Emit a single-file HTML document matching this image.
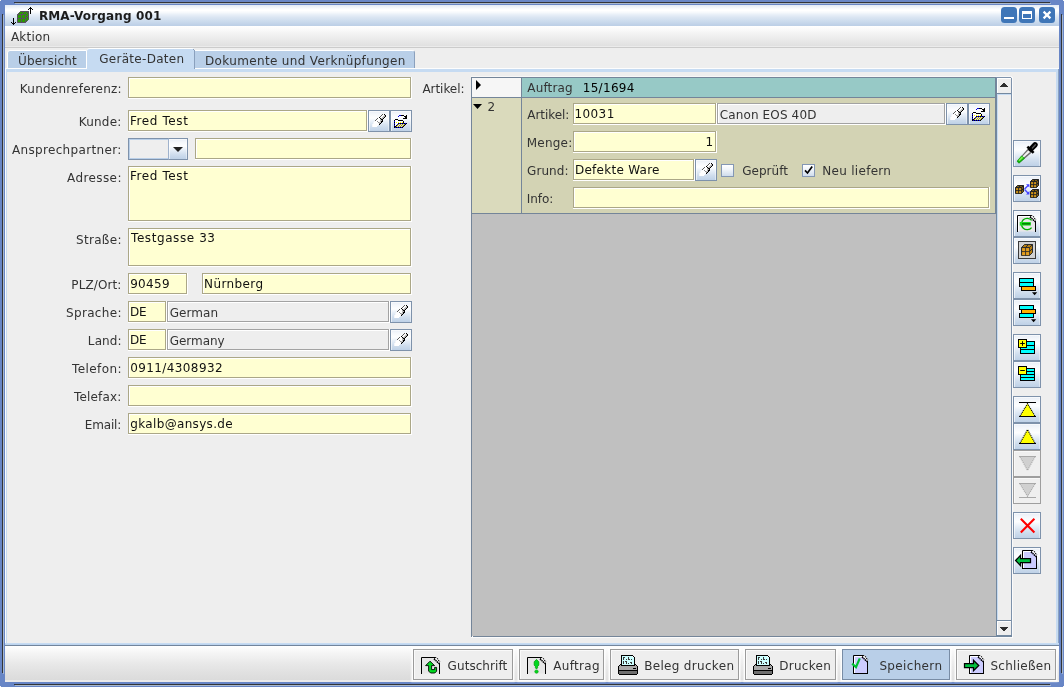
<!DOCTYPE html>
<html lang="de">
<head>
<meta charset="utf-8">
<title>RMA-Vorgang 001</title>
<style>
html,body{margin:0;padding:0;overflow:hidden;}
body{width:1064px;height:687px;overflow:hidden;background:#6886c6;position:relative;
  font-family:"DejaVu Sans","Liberation Sans",sans-serif;font-size:12px;color:#333333;line-height:15px;}
*{box-sizing:border-box;}
div,span,svg{position:absolute;}
.t{white-space:nowrap;height:15px;}
/* window frame */
.fr-dark{background:#333436;}
.fr-lite{background:#a5b7d2;}
#win{left:5px;top:5px;width:1054px;height:677px;background:#eeeeee;}
#title{left:5px;top:5px;width:1054px;height:21px;background:linear-gradient(#e2eaf5 0px,#eef3f9 2px,#fbfcfe 4px,#ffffff 5.5px,#f6f9fc 7.5px,#e9f0f8 9.5px,#dae5f2 12.5px,#cbdbed 16.5px,#c0d2e8 19.5px,#bccfe6 21px);}
#menu{left:5px;top:26px;width:1054px;height:22px;background:linear-gradient(#ffffff 0px,#fbfbfb 3px,#f2f2f2 8px,#e9e9e9 14px,#e0e0e0 20px,#ebebeb 20px,#ebebeb 21px,#cbcbcb 21px,#cbcbcb 22px);}
.wb{background:#3f76b8;border-radius:3.5px;width:16px;height:16px;top:7px;}
.wb i{position:absolute;background:#fff;display:block;}
/* tabs */
.tab{background:#b9cfe8;border:1px solid #fff;border-radius:3px 0 0 0;}
.tabsel{background:#c6dbf2;border-radius:3px 2px 0 0;}
#panel{left:5px;top:68px;width:1054px;height:578px;background:#eeeeee;}
/* fields */
.f{background:#ffffd2;border:1px solid #aba787;box-shadow:1px 1px 0 #ffffff,0 1px 0 #ffffff,1px 0 0 #ffffff,inset 1px 1px 0 #ffffff;}
.ro{background:#eeeeee;border-color:#a2a2a2;}
.b{border:1px solid #7e92ab;background:linear-gradient(#e8eef7 0,#f4f7fb 15%,#fdfeff 35%,#e6eef7 55%,#cfdded 78%,#bed1e7 100%);box-shadow:inset 1px 1px 0 rgba(255,255,255,.6),inset -1px 0 0 rgba(255,255,255,.4);}
.bd{border:1px solid #9e9e9e;background:#efefef;box-shadow:inset 1px 1px 0 #f8f8f8;}
.cb{width:13px;height:13px;border:1px solid #8497b4;background:linear-gradient(#ffffff 0,#f1f5fa 40%,#cfdcec 100%);}
/* grid */
#grid{left:471px;top:77px;width:526px;height:560px;background:#c0c0c0;border:1px solid #748599;}
/* bottom bar */
#bar{left:5px;top:646px;width:1054px;height:36px;background:linear-gradient(#ffffff 0px,#fcfcfc 2px,#f6f6f6 6px,#efefef 12px,#e8e8e8 18px,#e1e1e1 26px,#dbdbdb 34px,#ebeae9 34px,#ebeae9 36px);}
.bb{top:649px;height:31px;background:#eeeeee;border:1px solid #9b9b9b;box-shadow:inset 1px 1px 0 #fafafa,0 0 0 1px #fdfdfd,0 0 1.5px 2px rgba(255,255,255,.7),0 -2px 0 1px #fdfdfd;}
.bbsel{background:#b9cfe8;border-color:#788ca5;box-shadow:0 0 0 1px #fdfdfd,0 0 1.5px 2px rgba(255,255,255,.7),0 -2px 0 1px #fdfdfd;}
#txt{left:0;top:0;width:1064px;height:687px;will-change:transform;}

</style>
</head>
<body>
<!-- window frame decorations -->
<div class="fr-dark" style="left:14px;top:2px;width:1036px;height:1px"></div>
<div class="fr-lite" style="left:15px;top:3px;width:1036px;height:1px;background:#a8b8cc"></div>
<div class="fr-dark" style="left:2px;top:14px;width:1px;height:659px"></div>
<div class="fr-lite" style="left:3px;top:15px;width:1px;height:659px"></div>
<div class="fr-dark" style="left:1061px;top:14px;width:1px;height:659px"></div>
<div class="fr-lite" style="left:1062px;top:15px;width:1px;height:659px"></div>
<div class="fr-dark" style="left:14px;top:684px;width:1036px;height:1px"></div>
<div class="fr-lite" style="left:15px;top:685px;width:1036px;height:1px;background:#a8b8cc"></div>
<div style="left:0;top:0;width:1px;height:1px;background:#f4f4f4"></div>
<div style="left:1063px;top:0;width:1px;height:1px;background:#f4f4f4"></div>
<div style="left:0;top:686px;width:1px;height:1px;background:#f4f4f4"></div>
<div style="left:1063px;top:686px;width:1px;height:1px;background:#f4f4f4"></div>
<div id="win"></div>
<div id="title"></div>
<div id="menu"></div>
<!-- window buttons -->
<div class="wb" style="left:1001px"><i style="left:3px;top:10px;width:10px;height:2px"></i></div>
<div class="wb" style="left:1019px"><i style="left:3px;top:4px;width:10px;height:8px"></i><i style="left:4px;top:7px;width:8px;height:4px;background:#3f76b8"></i></div>
<div class="wb" style="left:1039px"><svg style="left:0;top:0" width="16" height="16" viewBox="0 0 16 16"><path d="M4.6 4.6 L11.4 11.4 M11.4 4.6 L4.6 11.4" stroke="#fff" stroke-width="2.2" fill="none"/></svg></div>
<!-- tabs -->
<div class="tab" style="left:7px;top:50px;width:80px;height:19px"></div>
<div class="tab" style="left:194px;top:50px;width:221px;height:19px;border-radius:0 3px 0 0;border-right-color:#8aa0bd"></div>
<div id="panel"></div>
<div style="left:5px;top:68px;width:1054px;height:1px;background:#fdfdfd"></div>
<div style="left:5px;top:69px;width:1054px;height:3px;background:#c6dbf2"></div>
<div style="left:5px;top:69px;width:1px;height:576px;background:#fdfdfd"></div>
<div style="left:6px;top:69px;width:1px;height:575px;background:#c6dbf2"></div>
<div style="left:1056px;top:69px;width:2px;height:575px;background:#c6dbf2"></div>
<div style="left:1058px;top:69px;width:1px;height:576px;background:#8da3bf"></div>
<div style="left:5px;top:643px;width:1054px;height:2px;background:linear-gradient(#cbdff4,#b7d0ec)"></div>
<div style="left:5px;top:645px;width:1054px;height:1px;background:#72859c"></div>
<div class="tabsel" style="left:87px;top:48px;width:107px;height:24px;border-top:1px solid #ffffff"></div>
<div style="left:193px;top:49px;width:1px;height:1px;background:#8aa0bd"></div>
<div style="left:194px;top:50px;width:1px;height:19px;background:#8aa0bd"></div>
<!-- left form fields -->
<div class="f" style="left:128px;top:77px;width:283px;height:21px"></div>
<div class="f" style="left:128px;top:110px;width:239px;height:21px"></div>
<div class="b" style="left:368px;top:110px;width:22px;height:22px"></div>
<div class="b" style="left:390px;top:110px;width:22px;height:22px"></div>
<div class="b" style="left:128px;top:138px;width:60px;height:22px;background:#eeeeee;box-shadow:inset 1px 1px 0 #b9cfe8,inset -1px -1px 0 #b9cfe8"></div>
<div class="b" style="left:168px;top:138px;width:20px;height:22px;border-left-color:#9fb2cc"></div>
<svg style="left:173px;top:147px" width="10" height="5" viewBox="0 0 10 5"><path d="M0 0H10L5 5Z" fill="#222"/></svg>
<div class="f" style="left:195px;top:138px;width:216px;height:21px"></div>
<div class="f" style="left:128px;top:166px;width:283px;height:55px"></div>
<div class="f" style="left:128px;top:228px;width:283px;height:38px"></div>
<div class="f" style="left:128px;top:273px;width:59px;height:21px"></div>
<div class="f" style="left:202px;top:273px;width:209px;height:21px"></div>
<div class="f" style="left:128px;top:301px;width:38px;height:21px"></div>
<div class="f ro" style="left:167px;top:301px;width:222px;height:21px"></div>
<div class="b" style="left:390px;top:301px;width:22px;height:22px"></div>
<div class="f" style="left:128px;top:329px;width:38px;height:21px"></div>
<div class="f ro" style="left:167px;top:329px;width:222px;height:21px"></div>
<div class="b" style="left:390px;top:329px;width:22px;height:22px"></div>
<div class="f" style="left:128px;top:357px;width:283px;height:21px"></div>
<div class="f" style="left:128px;top:385px;width:283px;height:21px"></div>
<div class="f" style="left:128px;top:413px;width:283px;height:21px"></div>
<!-- grid -->
<div id="grid"></div>
<div style="left:472px;top:78px;width:49px;height:19px;background:#f6f6f6"></div>
<div style="left:522px;top:78px;width:474px;height:19px;background:#97c9c6"></div>
<div style="left:472px;top:97px;width:524px;height:1px;background:#748599"></div>
<div style="left:472px;top:98px;width:49px;height:115px;background:#dadabc"></div>
<div style="left:522px;top:98px;width:474px;height:115px;background:#d3d3b4"></div>
<div style="left:521px;top:78px;width:1px;height:135px;background:#748599"></div>
<div style="left:472px;top:213px;width:524px;height:1px;background:#748599"></div>
<div style="left:995px;top:78px;width:1px;height:136px;background:#748599"></div>
<svg style="left:476px;top:80px" width="5" height="10" viewBox="0 0 5 10"><path d="M0 0L5 5L0 10Z" fill="#000"/></svg>
<svg style="left:473px;top:104px" width="9" height="5" viewBox="0 0 9 5"><path d="M0 0H9L4.5 5Z" fill="#000"/></svg>
<div class="f" style="left:573px;top:103px;width:143px;height:21px"></div>
<div class="f ro" style="left:717px;top:103px;width:228px;height:21px"></div>
<div class="b" style="left:946px;top:103px;width:22px;height:22px"></div>
<div class="b" style="left:968px;top:103px;width:22px;height:22px"></div>
<div class="f" style="left:573px;top:131px;width:143px;height:21px"></div>
<div class="f" style="left:573px;top:159px;width:121px;height:21px"></div>
<div class="b" style="left:695px;top:159px;width:22px;height:22px"></div>
<div class="cb" style="left:721px;top:164px"></div>
<div class="cb" style="left:802px;top:164px"></div>
<div class="f" style="left:573px;top:187px;width:416px;height:21px"></div>
<div style="left:472px;top:636px;width:1px;height:1px;background:#fbfbfb"></div>
<!-- scrollbar -->
<div style="left:471px;top:76px;width:541px;height:1px;background:#f7f7f7"></div>
<div style="left:1012px;top:77px;width:1px;height:561px;background:#fbfbfb"></div>
<div style="left:471px;top:637px;width:542px;height:1px;background:#fbfbfb"></div>
<div style="left:996px;top:77px;width:16px;height:560px;background:#eeeeee"></div>
<div style="left:997px;top:94px;width:1px;height:526px;background:#c6dbf2"></div>
<div style="left:996px;top:77px;width:1px;height:560px;background:#73889f"></div>
<div style="left:1011px;top:78px;width:1px;height:558px;background:#7e92ab"></div>
<div style="left:996px;top:77px;width:15px;height:1px;background:#7e92ab"></div>
<div style="left:996px;top:635px;width:16px;height:2px;background:#73889f"></div>
<div style="left:997px;top:78px;width:14px;height:1px;background:#ffffff"></div>
<div style="left:997px;top:78px;width:1px;height:15px;background:#ffffff"></div>
<div style="left:997px;top:93px;width:14px;height:1px;background:#73889f"></div>
<div style="left:997px;top:94px;width:14px;height:1px;background:#c6dbf2"></div>
<div style="left:997px;top:620px;width:14px;height:1px;background:#73889f"></div>
<div style="left:997px;top:621px;width:14px;height:1px;background:#ffffff"></div>
<div style="left:997px;top:621px;width:1px;height:14px;background:#ffffff"></div>
<svg style="left:1000px;top:83px" width="8" height="4" viewBox="0 0 8 4" shape-rendering="crispEdges"><path d="M3 0h2v1h-2zM2 1h4v1h-4zM1 2h6v1h-6zM0 3h8v1h-8z" fill="#2e2e2e"/></svg>
<svg style="left:1000px;top:627px" width="8" height="4" viewBox="0 0 8 4" shape-rendering="crispEdges"><path d="M0 0h8v1h-8zM1 1h6v1h-6zM2 2h4v1h-4zM3 3h2v1h-2z" fill="#2e2e2e"/></svg>
<!-- right toolbar -->
<div class="b" style="left:1013px;top:140px;width:28px;height:27px"></div>
<div class="b" style="left:1013px;top:175px;width:28px;height:27px"></div>
<div class="b" style="left:1013px;top:210px;width:28px;height:27px"></div>
<div class="b" style="left:1013px;top:237px;width:28px;height:27px"></div>
<div class="b" style="left:1013px;top:272px;width:28px;height:27px"></div>
<div class="b" style="left:1013px;top:299px;width:28px;height:27px"></div>
<div class="b" style="left:1013px;top:334px;width:28px;height:27px"></div>
<div class="b" style="left:1013px;top:361px;width:28px;height:27px"></div>
<div class="b" style="left:1013px;top:396px;width:28px;height:27px"></div>
<div class="b" style="left:1013px;top:423px;width:28px;height:27px"></div>
<div class="bd" style="left:1013px;top:450px;width:28px;height:27px"></div>
<div class="bd" style="left:1013px;top:477px;width:28px;height:27px"></div>
<div class="b" style="left:1013px;top:512px;width:28px;height:27px"></div>
<div class="b" style="left:1013px;top:547px;width:28px;height:27px"></div>
<!-- bottom bar -->
<div id="bar"></div>
<div class="bb" style="left:413px;width:100px"></div>
<div class="bb" style="left:519px;width:85px"></div>
<div class="bb" style="left:610px;width:129px"></div>
<div class="bb" style="left:745px;width:91px"></div>
<div class="bb bbsel" style="left:842px;width:108px"></div>
<div class="bb" style="left:956px;width:100px"></div>

<!-- icons -->
<svg id="ico" width="1064" height="687" viewBox="0 0 1064 687" style="left:0;top:0"><path d="M17.5 14.5l3 -3h8v8l-3 3Z" fill="#2a9b00"/><path d="M17.5 14.5h8v8h-8Z M17.5 14.5l3 -3h8l-3 3 M28.5 11.5v8l-3 3" fill="#2a9b00" stroke="#57525c" stroke-linejoin="round"/><path d="M21.5 14.5v8 M17.5 18.5h8 M21.5 14.5l3 -3 M25.5 18.5l3 -3" fill="none" stroke="#57525c" stroke-width="1"/>
<path shape-rendering="crispEdges" d="M30 7h1v7h-1zM29 8h3v1h-3zM28 9h1v1h-1zM32 9h1v1h-1z" fill="#000"/>
<path shape-rendering="crispEdges" d="M13 18h1v7h-1zM12 23h3v1h-3zM11 22h1v1h-1zM15 22h1v1h-1z" fill="#000"/>
<path d="M28.5 9.5L29.5 8.5M32.5 9.5L31.5 8.5M11.5 22.5L12.5 23.5M15.5 22.5L14.5 23.5" stroke="#000" stroke-width="0.7" fill="none"/>
<g transform="translate(368,110)"><g shape-rendering="crispEdges"><rect x="14" y="4" width="1" height="1" fill="#5a5a5a"/><rect x="15" y="4" width="1" height="1" fill="#ffffff"/><rect x="16" y="4" width="1" height="1" fill="#000000"/><rect x="13" y="5" width="1" height="1" fill="#5a5a5a"/><rect x="14" y="5" width="2" height="1" fill="#ffffff"/><rect x="16" y="5" width="1" height="1" fill="#bcbcbc"/><rect x="17" y="5" width="1" height="1" fill="#000000"/><rect x="12" y="6" width="1" height="1" fill="#5a5a5a"/><rect x="13" y="6" width="2" height="1" fill="#ffffff"/><rect x="15" y="6" width="2" height="1" fill="#bcbcbc"/><rect x="17" y="6" width="1" height="1" fill="#000000"/><rect x="11" y="7" width="1" height="1" fill="#000000"/><rect x="12" y="7" width="2" height="1" fill="#ffffff"/><rect x="14" y="7" width="2" height="1" fill="#bcbcbc"/><rect x="16" y="7" width="1" height="1" fill="#000000"/><rect x="9" y="8" width="1" height="1" fill="#5a5a5a"/><rect x="10" y="8" width="2" height="1" fill="#ffffff"/><rect x="12" y="8" width="1" height="1" fill="#000000"/><rect x="13" y="8" width="2" height="1" fill="#bcbcbc"/><rect x="15" y="8" width="1" height="1" fill="#000000"/><rect x="8" y="9" width="1" height="1" fill="#5a5a5a"/><rect x="9" y="9" width="3" height="1" fill="#ffffff"/><rect x="12" y="9" width="1" height="1" fill="#bcbcbc"/><rect x="13" y="9" width="2" height="1" fill="#000000"/><rect x="7" y="10" width="1" height="1" fill="#5a5a5a"/><rect x="8" y="10" width="4" height="1" fill="#ffffff"/><rect x="12" y="10" width="2" height="1" fill="#bcbcbc"/><rect x="14" y="10" width="1" height="1" fill="#000000"/><rect x="6" y="11" width="1" height="1" fill="#f4f6fa"/><rect x="7" y="11" width="2" height="1" fill="#ffffff"/><rect x="9" y="11" width="1" height="1" fill="#8c8c8c"/><rect x="10" y="11" width="2" height="1" fill="#ffffff"/><rect x="12" y="11" width="1" height="1" fill="#bcbcbc"/><rect x="13" y="11" width="2" height="1" fill="#000000"/><rect x="5" y="12" width="1" height="1" fill="#f4f6fa"/><rect x="6" y="12" width="4" height="1" fill="#ffffff"/><rect x="10" y="12" width="1" height="1" fill="#8c8c8c"/><rect x="11" y="12" width="2" height="1" fill="#bcbcbc"/><rect x="13" y="12" width="1" height="1" fill="#000000"/><rect x="5" y="13" width="1" height="1" fill="#f4f6fa"/><rect x="6" y="13" width="5" height="1" fill="#ffffff"/><rect x="11" y="13" width="1" height="1" fill="#8c8c8c"/><rect x="12" y="13" width="1" height="1" fill="#000000"/><rect x="4" y="14" width="1" height="1" fill="#f4f6fa"/><rect x="5" y="14" width="6" height="1" fill="#ffffff"/><rect x="11" y="14" width="1" height="1" fill="#000000"/><rect x="4" y="15" width="1" height="1" fill="#f4f6fa"/><rect x="5" y="15" width="5" height="1" fill="#ffffff"/><rect x="4" y="16" width="1" height="1" fill="#f4f6fa"/><rect x="5" y="16" width="4" height="1" fill="#ffffff"/></g></g>
<g transform="translate(390,301)"><g shape-rendering="crispEdges"><rect x="14" y="4" width="1" height="1" fill="#5a5a5a"/><rect x="15" y="4" width="1" height="1" fill="#ffffff"/><rect x="16" y="4" width="1" height="1" fill="#000000"/><rect x="13" y="5" width="1" height="1" fill="#5a5a5a"/><rect x="14" y="5" width="2" height="1" fill="#ffffff"/><rect x="16" y="5" width="1" height="1" fill="#bcbcbc"/><rect x="17" y="5" width="1" height="1" fill="#000000"/><rect x="12" y="6" width="1" height="1" fill="#5a5a5a"/><rect x="13" y="6" width="2" height="1" fill="#ffffff"/><rect x="15" y="6" width="2" height="1" fill="#bcbcbc"/><rect x="17" y="6" width="1" height="1" fill="#000000"/><rect x="11" y="7" width="1" height="1" fill="#000000"/><rect x="12" y="7" width="2" height="1" fill="#ffffff"/><rect x="14" y="7" width="2" height="1" fill="#bcbcbc"/><rect x="16" y="7" width="1" height="1" fill="#000000"/><rect x="9" y="8" width="1" height="1" fill="#5a5a5a"/><rect x="10" y="8" width="2" height="1" fill="#ffffff"/><rect x="12" y="8" width="1" height="1" fill="#000000"/><rect x="13" y="8" width="2" height="1" fill="#bcbcbc"/><rect x="15" y="8" width="1" height="1" fill="#000000"/><rect x="8" y="9" width="1" height="1" fill="#5a5a5a"/><rect x="9" y="9" width="3" height="1" fill="#ffffff"/><rect x="12" y="9" width="1" height="1" fill="#bcbcbc"/><rect x="13" y="9" width="2" height="1" fill="#000000"/><rect x="7" y="10" width="1" height="1" fill="#5a5a5a"/><rect x="8" y="10" width="4" height="1" fill="#ffffff"/><rect x="12" y="10" width="2" height="1" fill="#bcbcbc"/><rect x="14" y="10" width="1" height="1" fill="#000000"/><rect x="6" y="11" width="1" height="1" fill="#f4f6fa"/><rect x="7" y="11" width="2" height="1" fill="#ffffff"/><rect x="9" y="11" width="1" height="1" fill="#8c8c8c"/><rect x="10" y="11" width="2" height="1" fill="#ffffff"/><rect x="12" y="11" width="1" height="1" fill="#bcbcbc"/><rect x="13" y="11" width="2" height="1" fill="#000000"/><rect x="5" y="12" width="1" height="1" fill="#f4f6fa"/><rect x="6" y="12" width="4" height="1" fill="#ffffff"/><rect x="10" y="12" width="1" height="1" fill="#8c8c8c"/><rect x="11" y="12" width="2" height="1" fill="#bcbcbc"/><rect x="13" y="12" width="1" height="1" fill="#000000"/><rect x="5" y="13" width="1" height="1" fill="#f4f6fa"/><rect x="6" y="13" width="5" height="1" fill="#ffffff"/><rect x="11" y="13" width="1" height="1" fill="#8c8c8c"/><rect x="12" y="13" width="1" height="1" fill="#000000"/><rect x="4" y="14" width="1" height="1" fill="#f4f6fa"/><rect x="5" y="14" width="6" height="1" fill="#ffffff"/><rect x="11" y="14" width="1" height="1" fill="#000000"/><rect x="4" y="15" width="1" height="1" fill="#f4f6fa"/><rect x="5" y="15" width="5" height="1" fill="#ffffff"/><rect x="4" y="16" width="1" height="1" fill="#f4f6fa"/><rect x="5" y="16" width="4" height="1" fill="#ffffff"/></g></g>
<g transform="translate(390,329)"><g shape-rendering="crispEdges"><rect x="14" y="4" width="1" height="1" fill="#5a5a5a"/><rect x="15" y="4" width="1" height="1" fill="#ffffff"/><rect x="16" y="4" width="1" height="1" fill="#000000"/><rect x="13" y="5" width="1" height="1" fill="#5a5a5a"/><rect x="14" y="5" width="2" height="1" fill="#ffffff"/><rect x="16" y="5" width="1" height="1" fill="#bcbcbc"/><rect x="17" y="5" width="1" height="1" fill="#000000"/><rect x="12" y="6" width="1" height="1" fill="#5a5a5a"/><rect x="13" y="6" width="2" height="1" fill="#ffffff"/><rect x="15" y="6" width="2" height="1" fill="#bcbcbc"/><rect x="17" y="6" width="1" height="1" fill="#000000"/><rect x="11" y="7" width="1" height="1" fill="#000000"/><rect x="12" y="7" width="2" height="1" fill="#ffffff"/><rect x="14" y="7" width="2" height="1" fill="#bcbcbc"/><rect x="16" y="7" width="1" height="1" fill="#000000"/><rect x="9" y="8" width="1" height="1" fill="#5a5a5a"/><rect x="10" y="8" width="2" height="1" fill="#ffffff"/><rect x="12" y="8" width="1" height="1" fill="#000000"/><rect x="13" y="8" width="2" height="1" fill="#bcbcbc"/><rect x="15" y="8" width="1" height="1" fill="#000000"/><rect x="8" y="9" width="1" height="1" fill="#5a5a5a"/><rect x="9" y="9" width="3" height="1" fill="#ffffff"/><rect x="12" y="9" width="1" height="1" fill="#bcbcbc"/><rect x="13" y="9" width="2" height="1" fill="#000000"/><rect x="7" y="10" width="1" height="1" fill="#5a5a5a"/><rect x="8" y="10" width="4" height="1" fill="#ffffff"/><rect x="12" y="10" width="2" height="1" fill="#bcbcbc"/><rect x="14" y="10" width="1" height="1" fill="#000000"/><rect x="6" y="11" width="1" height="1" fill="#f4f6fa"/><rect x="7" y="11" width="2" height="1" fill="#ffffff"/><rect x="9" y="11" width="1" height="1" fill="#8c8c8c"/><rect x="10" y="11" width="2" height="1" fill="#ffffff"/><rect x="12" y="11" width="1" height="1" fill="#bcbcbc"/><rect x="13" y="11" width="2" height="1" fill="#000000"/><rect x="5" y="12" width="1" height="1" fill="#f4f6fa"/><rect x="6" y="12" width="4" height="1" fill="#ffffff"/><rect x="10" y="12" width="1" height="1" fill="#8c8c8c"/><rect x="11" y="12" width="2" height="1" fill="#bcbcbc"/><rect x="13" y="12" width="1" height="1" fill="#000000"/><rect x="5" y="13" width="1" height="1" fill="#f4f6fa"/><rect x="6" y="13" width="5" height="1" fill="#ffffff"/><rect x="11" y="13" width="1" height="1" fill="#8c8c8c"/><rect x="12" y="13" width="1" height="1" fill="#000000"/><rect x="4" y="14" width="1" height="1" fill="#f4f6fa"/><rect x="5" y="14" width="6" height="1" fill="#ffffff"/><rect x="11" y="14" width="1" height="1" fill="#000000"/><rect x="4" y="15" width="1" height="1" fill="#f4f6fa"/><rect x="5" y="15" width="5" height="1" fill="#ffffff"/><rect x="4" y="16" width="1" height="1" fill="#f4f6fa"/><rect x="5" y="16" width="4" height="1" fill="#ffffff"/></g></g>
<g transform="translate(946,103)"><g shape-rendering="crispEdges"><rect x="14" y="4" width="1" height="1" fill="#5a5a5a"/><rect x="15" y="4" width="1" height="1" fill="#ffffff"/><rect x="16" y="4" width="1" height="1" fill="#000000"/><rect x="13" y="5" width="1" height="1" fill="#5a5a5a"/><rect x="14" y="5" width="2" height="1" fill="#ffffff"/><rect x="16" y="5" width="1" height="1" fill="#bcbcbc"/><rect x="17" y="5" width="1" height="1" fill="#000000"/><rect x="12" y="6" width="1" height="1" fill="#5a5a5a"/><rect x="13" y="6" width="2" height="1" fill="#ffffff"/><rect x="15" y="6" width="2" height="1" fill="#bcbcbc"/><rect x="17" y="6" width="1" height="1" fill="#000000"/><rect x="11" y="7" width="1" height="1" fill="#000000"/><rect x="12" y="7" width="2" height="1" fill="#ffffff"/><rect x="14" y="7" width="2" height="1" fill="#bcbcbc"/><rect x="16" y="7" width="1" height="1" fill="#000000"/><rect x="9" y="8" width="1" height="1" fill="#5a5a5a"/><rect x="10" y="8" width="2" height="1" fill="#ffffff"/><rect x="12" y="8" width="1" height="1" fill="#000000"/><rect x="13" y="8" width="2" height="1" fill="#bcbcbc"/><rect x="15" y="8" width="1" height="1" fill="#000000"/><rect x="8" y="9" width="1" height="1" fill="#5a5a5a"/><rect x="9" y="9" width="3" height="1" fill="#ffffff"/><rect x="12" y="9" width="1" height="1" fill="#bcbcbc"/><rect x="13" y="9" width="2" height="1" fill="#000000"/><rect x="7" y="10" width="1" height="1" fill="#5a5a5a"/><rect x="8" y="10" width="4" height="1" fill="#ffffff"/><rect x="12" y="10" width="2" height="1" fill="#bcbcbc"/><rect x="14" y="10" width="1" height="1" fill="#000000"/><rect x="6" y="11" width="1" height="1" fill="#f4f6fa"/><rect x="7" y="11" width="2" height="1" fill="#ffffff"/><rect x="9" y="11" width="1" height="1" fill="#8c8c8c"/><rect x="10" y="11" width="2" height="1" fill="#ffffff"/><rect x="12" y="11" width="1" height="1" fill="#bcbcbc"/><rect x="13" y="11" width="2" height="1" fill="#000000"/><rect x="5" y="12" width="1" height="1" fill="#f4f6fa"/><rect x="6" y="12" width="4" height="1" fill="#ffffff"/><rect x="10" y="12" width="1" height="1" fill="#8c8c8c"/><rect x="11" y="12" width="2" height="1" fill="#bcbcbc"/><rect x="13" y="12" width="1" height="1" fill="#000000"/><rect x="5" y="13" width="1" height="1" fill="#f4f6fa"/><rect x="6" y="13" width="5" height="1" fill="#ffffff"/><rect x="11" y="13" width="1" height="1" fill="#8c8c8c"/><rect x="12" y="13" width="1" height="1" fill="#000000"/><rect x="4" y="14" width="1" height="1" fill="#f4f6fa"/><rect x="5" y="14" width="6" height="1" fill="#ffffff"/><rect x="11" y="14" width="1" height="1" fill="#000000"/><rect x="4" y="15" width="1" height="1" fill="#f4f6fa"/><rect x="5" y="15" width="5" height="1" fill="#ffffff"/><rect x="4" y="16" width="1" height="1" fill="#f4f6fa"/><rect x="5" y="16" width="4" height="1" fill="#ffffff"/></g></g>
<g transform="translate(695,159)"><g shape-rendering="crispEdges"><rect x="14" y="4" width="1" height="1" fill="#5a5a5a"/><rect x="15" y="4" width="1" height="1" fill="#ffffff"/><rect x="16" y="4" width="1" height="1" fill="#000000"/><rect x="13" y="5" width="1" height="1" fill="#5a5a5a"/><rect x="14" y="5" width="2" height="1" fill="#ffffff"/><rect x="16" y="5" width="1" height="1" fill="#bcbcbc"/><rect x="17" y="5" width="1" height="1" fill="#000000"/><rect x="12" y="6" width="1" height="1" fill="#5a5a5a"/><rect x="13" y="6" width="2" height="1" fill="#ffffff"/><rect x="15" y="6" width="2" height="1" fill="#bcbcbc"/><rect x="17" y="6" width="1" height="1" fill="#000000"/><rect x="11" y="7" width="1" height="1" fill="#000000"/><rect x="12" y="7" width="2" height="1" fill="#ffffff"/><rect x="14" y="7" width="2" height="1" fill="#bcbcbc"/><rect x="16" y="7" width="1" height="1" fill="#000000"/><rect x="9" y="8" width="1" height="1" fill="#5a5a5a"/><rect x="10" y="8" width="2" height="1" fill="#ffffff"/><rect x="12" y="8" width="1" height="1" fill="#000000"/><rect x="13" y="8" width="2" height="1" fill="#bcbcbc"/><rect x="15" y="8" width="1" height="1" fill="#000000"/><rect x="8" y="9" width="1" height="1" fill="#5a5a5a"/><rect x="9" y="9" width="3" height="1" fill="#ffffff"/><rect x="12" y="9" width="1" height="1" fill="#bcbcbc"/><rect x="13" y="9" width="2" height="1" fill="#000000"/><rect x="7" y="10" width="1" height="1" fill="#5a5a5a"/><rect x="8" y="10" width="4" height="1" fill="#ffffff"/><rect x="12" y="10" width="2" height="1" fill="#bcbcbc"/><rect x="14" y="10" width="1" height="1" fill="#000000"/><rect x="6" y="11" width="1" height="1" fill="#f4f6fa"/><rect x="7" y="11" width="2" height="1" fill="#ffffff"/><rect x="9" y="11" width="1" height="1" fill="#8c8c8c"/><rect x="10" y="11" width="2" height="1" fill="#ffffff"/><rect x="12" y="11" width="1" height="1" fill="#bcbcbc"/><rect x="13" y="11" width="2" height="1" fill="#000000"/><rect x="5" y="12" width="1" height="1" fill="#f4f6fa"/><rect x="6" y="12" width="4" height="1" fill="#ffffff"/><rect x="10" y="12" width="1" height="1" fill="#8c8c8c"/><rect x="11" y="12" width="2" height="1" fill="#bcbcbc"/><rect x="13" y="12" width="1" height="1" fill="#000000"/><rect x="5" y="13" width="1" height="1" fill="#f4f6fa"/><rect x="6" y="13" width="5" height="1" fill="#ffffff"/><rect x="11" y="13" width="1" height="1" fill="#8c8c8c"/><rect x="12" y="13" width="1" height="1" fill="#000000"/><rect x="4" y="14" width="1" height="1" fill="#f4f6fa"/><rect x="5" y="14" width="6" height="1" fill="#ffffff"/><rect x="11" y="14" width="1" height="1" fill="#000000"/><rect x="4" y="15" width="1" height="1" fill="#f4f6fa"/><rect x="5" y="15" width="5" height="1" fill="#ffffff"/><rect x="4" y="16" width="1" height="1" fill="#f4f6fa"/><rect x="5" y="16" width="4" height="1" fill="#ffffff"/></g></g>
<g transform="translate(390,110)"><g shape-rendering="crispEdges"><rect x="9" y="5" width="2" height="1" fill="#0000e0"/><rect x="11" y="5" width="3" height="1" fill="#000000"/><rect x="16" y="5" width="1" height="1" fill="#000000"/><rect x="8" y="6" width="1" height="1" fill="#0000e0"/><rect x="14" y="6" width="3" height="1" fill="#000000"/><rect x="15" y="7" width="2" height="1" fill="#000000"/><rect x="13" y="8" width="4" height="1" fill="#000000"/><rect x="5" y="9" width="3" height="1" fill="#000000"/><rect x="4" y="10" width="1" height="1" fill="#000000"/><rect x="5" y="10" width="3" height="1" fill="#ffffff"/><rect x="8" y="10" width="5" height="1" fill="#000000"/><rect x="4" y="11" width="1" height="1" fill="#0000e0"/><rect x="5" y="11" width="8" height="1" fill="#ffffff"/><rect x="13" y="11" width="1" height="1" fill="#000000"/><rect x="4" y="12" width="1" height="1" fill="#000000"/><rect x="5" y="12" width="1" height="1" fill="#ffffff"/><rect x="6" y="12" width="1" height="1" fill="#ffff00"/><rect x="7" y="12" width="1" height="1" fill="#ffffff"/><rect x="8" y="12" width="1" height="1" fill="#ffff00"/><rect x="9" y="12" width="1" height="1" fill="#ffffff"/><rect x="10" y="12" width="1" height="1" fill="#ffff00"/><rect x="11" y="12" width="1" height="1" fill="#ffffff"/><rect x="12" y="12" width="1" height="1" fill="#ffff00"/><rect x="13" y="12" width="1" height="1" fill="#000000"/><rect x="4" y="13" width="1" height="1" fill="#0000e0"/><rect x="5" y="13" width="3" height="1" fill="#ffffff"/><rect x="8" y="13" width="1" height="1" fill="#000000"/><rect x="9" y="13" width="1" height="1" fill="#0000e0"/><rect x="10" y="13" width="1" height="1" fill="#000000"/><rect x="11" y="13" width="1" height="1" fill="#0000e0"/><rect x="12" y="13" width="1" height="1" fill="#000000"/><rect x="13" y="13" width="1" height="1" fill="#0000e0"/><rect x="14" y="13" width="1" height="1" fill="#000000"/><rect x="15" y="13" width="1" height="1" fill="#0000e0"/><rect x="16" y="13" width="1" height="1" fill="#000000"/><rect x="4" y="14" width="1" height="1" fill="#000000"/><rect x="5" y="14" width="2" height="1" fill="#ffffff"/><rect x="7" y="14" width="1" height="1" fill="#0000e0"/><rect x="8" y="14" width="1" height="1" fill="#9c9428"/><rect x="9" y="14" width="1" height="1" fill="#e8e8c4"/><rect x="10" y="14" width="1" height="1" fill="#9c9428"/><rect x="11" y="14" width="1" height="1" fill="#e8e8c4"/><rect x="12" y="14" width="1" height="1" fill="#9c9428"/><rect x="13" y="14" width="1" height="1" fill="#e8e8c4"/><rect x="14" y="14" width="1" height="1" fill="#9c9428"/><rect x="15" y="14" width="1" height="1" fill="#000000"/><rect x="4" y="15" width="1" height="1" fill="#0000e0"/><rect x="5" y="15" width="1" height="1" fill="#ffffff"/><rect x="6" y="15" width="1" height="1" fill="#000000"/><rect x="7" y="15" width="1" height="1" fill="#9c9428"/><rect x="8" y="15" width="1" height="1" fill="#e8e8c4"/><rect x="9" y="15" width="1" height="1" fill="#9c9428"/><rect x="10" y="15" width="1" height="1" fill="#e8e8c4"/><rect x="11" y="15" width="1" height="1" fill="#9c9428"/><rect x="12" y="15" width="1" height="1" fill="#e8e8c4"/><rect x="13" y="15" width="1" height="1" fill="#9c9428"/><rect x="14" y="15" width="1" height="1" fill="#000000"/><rect x="4" y="16" width="2" height="1" fill="#000000"/><rect x="6" y="16" width="1" height="1" fill="#9c9428"/><rect x="7" y="16" width="1" height="1" fill="#e8e8c4"/><rect x="8" y="16" width="1" height="1" fill="#9c9428"/><rect x="9" y="16" width="1" height="1" fill="#e8e8c4"/><rect x="10" y="16" width="1" height="1" fill="#9c9428"/><rect x="11" y="16" width="1" height="1" fill="#e8e8c4"/><rect x="12" y="16" width="1" height="1" fill="#9c9428"/><rect x="13" y="16" width="1" height="1" fill="#000000"/><rect x="4" y="17" width="1" height="1" fill="#000000"/><rect x="5" y="17" width="1" height="1" fill="#0000e0"/><rect x="6" y="17" width="1" height="1" fill="#000000"/><rect x="7" y="17" width="1" height="1" fill="#0000e0"/><rect x="8" y="17" width="1" height="1" fill="#000000"/><rect x="9" y="17" width="1" height="1" fill="#0000e0"/><rect x="10" y="17" width="1" height="1" fill="#000000"/><rect x="11" y="17" width="1" height="1" fill="#0000e0"/><rect x="12" y="17" width="1" height="1" fill="#000000"/></g></g>
<g transform="translate(968,103)"><g shape-rendering="crispEdges"><rect x="9" y="5" width="2" height="1" fill="#0000e0"/><rect x="11" y="5" width="3" height="1" fill="#000000"/><rect x="16" y="5" width="1" height="1" fill="#000000"/><rect x="8" y="6" width="1" height="1" fill="#0000e0"/><rect x="14" y="6" width="3" height="1" fill="#000000"/><rect x="15" y="7" width="2" height="1" fill="#000000"/><rect x="13" y="8" width="4" height="1" fill="#000000"/><rect x="5" y="9" width="3" height="1" fill="#000000"/><rect x="4" y="10" width="1" height="1" fill="#000000"/><rect x="5" y="10" width="3" height="1" fill="#ffffff"/><rect x="8" y="10" width="5" height="1" fill="#000000"/><rect x="4" y="11" width="1" height="1" fill="#0000e0"/><rect x="5" y="11" width="8" height="1" fill="#ffffff"/><rect x="13" y="11" width="1" height="1" fill="#000000"/><rect x="4" y="12" width="1" height="1" fill="#000000"/><rect x="5" y="12" width="1" height="1" fill="#ffffff"/><rect x="6" y="12" width="1" height="1" fill="#ffff00"/><rect x="7" y="12" width="1" height="1" fill="#ffffff"/><rect x="8" y="12" width="1" height="1" fill="#ffff00"/><rect x="9" y="12" width="1" height="1" fill="#ffffff"/><rect x="10" y="12" width="1" height="1" fill="#ffff00"/><rect x="11" y="12" width="1" height="1" fill="#ffffff"/><rect x="12" y="12" width="1" height="1" fill="#ffff00"/><rect x="13" y="12" width="1" height="1" fill="#000000"/><rect x="4" y="13" width="1" height="1" fill="#0000e0"/><rect x="5" y="13" width="3" height="1" fill="#ffffff"/><rect x="8" y="13" width="1" height="1" fill="#000000"/><rect x="9" y="13" width="1" height="1" fill="#0000e0"/><rect x="10" y="13" width="1" height="1" fill="#000000"/><rect x="11" y="13" width="1" height="1" fill="#0000e0"/><rect x="12" y="13" width="1" height="1" fill="#000000"/><rect x="13" y="13" width="1" height="1" fill="#0000e0"/><rect x="14" y="13" width="1" height="1" fill="#000000"/><rect x="15" y="13" width="1" height="1" fill="#0000e0"/><rect x="16" y="13" width="1" height="1" fill="#000000"/><rect x="4" y="14" width="1" height="1" fill="#000000"/><rect x="5" y="14" width="2" height="1" fill="#ffffff"/><rect x="7" y="14" width="1" height="1" fill="#0000e0"/><rect x="8" y="14" width="1" height="1" fill="#9c9428"/><rect x="9" y="14" width="1" height="1" fill="#e8e8c4"/><rect x="10" y="14" width="1" height="1" fill="#9c9428"/><rect x="11" y="14" width="1" height="1" fill="#e8e8c4"/><rect x="12" y="14" width="1" height="1" fill="#9c9428"/><rect x="13" y="14" width="1" height="1" fill="#e8e8c4"/><rect x="14" y="14" width="1" height="1" fill="#9c9428"/><rect x="15" y="14" width="1" height="1" fill="#000000"/><rect x="4" y="15" width="1" height="1" fill="#0000e0"/><rect x="5" y="15" width="1" height="1" fill="#ffffff"/><rect x="6" y="15" width="1" height="1" fill="#000000"/><rect x="7" y="15" width="1" height="1" fill="#9c9428"/><rect x="8" y="15" width="1" height="1" fill="#e8e8c4"/><rect x="9" y="15" width="1" height="1" fill="#9c9428"/><rect x="10" y="15" width="1" height="1" fill="#e8e8c4"/><rect x="11" y="15" width="1" height="1" fill="#9c9428"/><rect x="12" y="15" width="1" height="1" fill="#e8e8c4"/><rect x="13" y="15" width="1" height="1" fill="#9c9428"/><rect x="14" y="15" width="1" height="1" fill="#000000"/><rect x="4" y="16" width="2" height="1" fill="#000000"/><rect x="6" y="16" width="1" height="1" fill="#9c9428"/><rect x="7" y="16" width="1" height="1" fill="#e8e8c4"/><rect x="8" y="16" width="1" height="1" fill="#9c9428"/><rect x="9" y="16" width="1" height="1" fill="#e8e8c4"/><rect x="10" y="16" width="1" height="1" fill="#9c9428"/><rect x="11" y="16" width="1" height="1" fill="#e8e8c4"/><rect x="12" y="16" width="1" height="1" fill="#9c9428"/><rect x="13" y="16" width="1" height="1" fill="#000000"/><rect x="4" y="17" width="1" height="1" fill="#000000"/><rect x="5" y="17" width="1" height="1" fill="#0000e0"/><rect x="6" y="17" width="1" height="1" fill="#000000"/><rect x="7" y="17" width="1" height="1" fill="#0000e0"/><rect x="8" y="17" width="1" height="1" fill="#000000"/><rect x="9" y="17" width="1" height="1" fill="#0000e0"/><rect x="10" y="17" width="1" height="1" fill="#000000"/><rect x="11" y="17" width="1" height="1" fill="#0000e0"/><rect x="12" y="17" width="1" height="1" fill="#000000"/></g></g>
<path d="M805 170.4L807.5 173L812.2 166.6" fill="none" stroke="#000" stroke-width="1.7"/>
<path d="M1028 148.6L1031.8 152.4L1019 163.4L1016.8 161.2Z" fill="#6a6a6a"/><path d="M1028.6 150L1030.4 151.8L1022.6 158.6L1021.4 157.4Z" fill="#f2f2f2"/><path d="M1021.6 155.4L1025 158.2L1019 163.4L1016.8 161.2Z" fill="#0fae0f"/><path d="M1021.8 156.6L1023.4 157.8L1019.4 161.2L1018.4 160.2Z" fill="#7cf04c"/><path d="M1035 144.8L1031 149" stroke="#000" stroke-width="5.4" stroke-linecap="round"/><path d="M1027.4 146.6L1033.6 152.8" stroke="#000" stroke-width="2.6"/><path d="M1035.4 144.8L1032.4 148" stroke="#585858" stroke-width="1.3" stroke-linecap="round"/>
<path d="M1015.5 187.5l2 -2h6v6l-2 2Z" fill="#7e5e12"/><path d="M1015.5 187.5h6v6h-6Z M1015.5 187.5l2 -2h6l-2 2 M1023.5 185.5v6l-2 2" fill="#7e5e12" stroke="#222222" stroke-linejoin="round"/><path d="M1018.5 187.5v6 M1015.5 190.5h6 M1018.5 187.5l2 -2 M1021.5 190.5l2 -2" fill="none" stroke="#222222" stroke-width="1"/><rect x="1016.2" y="188.2" width="2.0" height="2.0" fill="#d0961a"/><rect x="1019.2" y="188.2" width="2.0" height="2.0" fill="#d0961a"/><rect x="1016.2" y="191.2" width="2.0" height="2.0" fill="#d0961a"/><rect x="1019.2" y="191.2" width="2.0" height="2.0" fill="#d0961a"/>
<path d="M1030.5 181.5l2 -2h6v6l-2 2Z" fill="#7e5e12"/><path d="M1030.5 181.5h6v6h-6Z M1030.5 181.5l2 -2h6l-2 2 M1038.5 179.5v6l-2 2" fill="#7e5e12" stroke="#222222" stroke-linejoin="round"/><path d="M1033.5 181.5v6 M1030.5 184.5h6 M1033.5 181.5l2 -2 M1036.5 184.5l2 -2" fill="none" stroke="#222222" stroke-width="1"/><rect x="1031.2" y="182.2" width="2.0" height="2.0" fill="#d0961a"/><rect x="1034.2" y="182.2" width="2.0" height="2.0" fill="#d0961a"/><rect x="1031.2" y="185.2" width="2.0" height="2.0" fill="#d0961a"/><rect x="1034.2" y="185.2" width="2.0" height="2.0" fill="#d0961a"/>
<path d="M1030.5 191.5l2 -2h6v6l-2 2Z" fill="#7e5e12"/><path d="M1030.5 191.5h6v6h-6Z M1030.5 191.5l2 -2h6l-2 2 M1038.5 189.5v6l-2 2" fill="#7e5e12" stroke="#222222" stroke-linejoin="round"/><path d="M1033.5 191.5v6 M1030.5 194.5h6 M1033.5 191.5l2 -2 M1036.5 194.5l2 -2" fill="none" stroke="#222222" stroke-width="1"/><rect x="1031.2" y="192.2" width="2.0" height="2.0" fill="#d0961a"/><rect x="1034.2" y="192.2" width="2.0" height="2.0" fill="#d0961a"/><rect x="1031.2" y="195.2" width="2.0" height="2.0" fill="#d0961a"/><rect x="1034.2" y="195.2" width="2.0" height="2.0" fill="#d0961a"/>
<path d="M1024.6 189L1028.4 185.2 M1024.6 189.6L1028.4 193.4" stroke="#4848ff" stroke-width="1.4" fill="none"/><path d="M1026 184.2H1029.4V187.6Z M1026 194.4H1029.4V191Z" fill="#4040ff"/>
<path d="M1017.5 215.5H1031.5L1035.5 220.5V231.5H1017.5Z" fill="#e8e6e8"/><path d="M1018.5 231V216.5H1031" fill="none" stroke="#ffffff" stroke-width="1"/><path d="M1017.5 232V215.5H1032 M1035.5 220V232" fill="none" stroke="#000" stroke-width="1"/><rect x="1030" y="215" width="2.4" height="1.7" fill="#000"/><path d="M1030.6 216.2L1035.8 221.2L1035.8 219.4L1032.8 215.4Z" fill="#ffffff"/><path d="M1030 216.9L1035.6 222" fill="none" stroke="#000" stroke-width="1.5" stroke-dasharray="1.5 0.5"/><path d="M1033.1 216.3L1035.8 220" fill="none" stroke="#000" stroke-width="1.2" stroke-dasharray="1.2 0.9"/>
<path d="M1031.6 220.4A5.7 5.7 0 1 0 1031.6 227.6" fill="none" stroke="#00b000" stroke-width="1.3"/><rect x="1019.8" y="222" width="11" height="3.6" fill="#20e020"/><rect x="1022" y="223" width="8.4" height="1.6" fill="#008400"/>
<rect x="1018.5" y="241.5" width="17" height="17" fill="#d2d2d2" stroke="#3a3a3a" stroke-width="1"/>
<path d="M1021.5 247.5l3 -3h8v8l-3 3Z" fill="#b47c10"/><path d="M1021.5 247.5h8v8h-8Z M1021.5 247.5l3 -3h8l-3 3 M1032.5 244.5v8l-3 3" fill="#b47c10" stroke="#2c2c2c" stroke-linejoin="round"/><path d="M1025.5 247.5v8 M1021.5 251.5h8 M1025.5 247.5l3 -3 M1029.5 251.5l3 -3" fill="none" stroke="#2c2c2c" stroke-width="1"/><rect x="1022.2" y="248.2" width="3.0" height="3.0" fill="#e29c1e"/><rect x="1026.2" y="248.2" width="3.0" height="3.0" fill="#e29c1e"/><rect x="1022.2" y="252.2" width="3.0" height="3.0" fill="#e29c1e"/><rect x="1026.2" y="252.2" width="3.0" height="3.0" fill="#e29c1e"/>
<rect x="1019" y="278" width="15" height="5" fill="#000"/><rect x="1020" y="279" width="13" height="3" fill="#00ffff"/><rect x="1019" y="282" width="15" height="5" fill="#000"/><rect x="1020" y="283" width="13" height="3" fill="#00ffff"/><rect x="1021" y="286" width="15" height="5" fill="#000"/><rect x="1022" y="287" width="13" height="3" fill="#ffb000"/>
<path d="M1032 292.3H1037.2L1034.6 295.2Z" fill="#000"/>
<rect x="1019" y="305" width="15" height="5" fill="#000"/><rect x="1020" y="306" width="13" height="3" fill="#00ffff"/>
<rect x="1019" y="313" width="15" height="5" fill="#000"/><rect x="1020" y="314" width="13" height="3" fill="#00ffff"/>
<rect x="1021" y="309" width="15" height="5" fill="#000"/><rect x="1022" y="310" width="13" height="3" fill="#ffb000"/>
<path d="M1031 319.3H1036.2L1033.6 322.2Z" fill="#000"/>
<rect x="1020" y="341" width="15" height="5" fill="#000"/><rect x="1021" y="342" width="13" height="3" fill="#00ffff"/><rect x="1020" y="345" width="15" height="5" fill="#000"/><rect x="1021" y="346" width="13" height="3" fill="#00ffff"/><rect x="1020" y="349" width="15" height="5" fill="#000"/><rect x="1021" y="350" width="13" height="3" fill="#00ffff"/>
<rect x="1018" y="339" width="9" height="9" fill="#000"/><rect x="1019" y="340" width="7" height="7" fill="#ffff00"/><path d="M1020.2 343.5H1024.8M1022.5 341.2V345.8" stroke="#000" stroke-width="1"/>
<rect x="1020" y="368" width="15" height="4" fill="#000"/><rect x="1021" y="369" width="13" height="2" fill="#00ffff"/><rect x="1020" y="371" width="15" height="4" fill="#000"/><rect x="1021" y="372" width="13" height="2" fill="#00ffff"/><rect x="1020" y="374" width="15" height="4" fill="#000"/><rect x="1021" y="375" width="13" height="2" fill="#00ffff"/><rect x="1020" y="377" width="15" height="4" fill="#000"/><rect x="1021" y="378" width="13" height="2" fill="#00ffff"/>
<rect x="1018" y="366" width="9" height="9" fill="#000"/><rect x="1019" y="367" width="7" height="7" fill="#ffff00"/><path d="M1020.2 370.5H1024.8" stroke="#000" stroke-width="1"/>
<rect x="1019" y="402" width="17" height="1" fill="#000"/>
<path d="M1027.5 403.4L1035 416.5H1020Z" fill="#ffff00"/><path d="M1020 416.2L1027.5 403.6L1035 416.2" fill="none" stroke="#000" stroke-width="1.1" stroke-dasharray="1.1 0.9"/><rect x="1019" y="416" width="17" height="1" fill="#000"/>
<path d="M1027.5 429.4L1035 443.5H1020Z" fill="#ffff00"/><path d="M1020 443.2L1027.5 429.6L1035 443.2" fill="none" stroke="#000" stroke-width="1.1" stroke-dasharray="1.1 0.9"/><rect x="1019" y="443" width="17" height="1" fill="#000"/>
<path d="M1020 456.5H1035L1027.5 470.6Z" fill="#d0d0d0"/><path d="M1020 456.8L1027.5 470.4L1035 456.8" fill="none" stroke="#a8a8a8" stroke-width="1.1" stroke-dasharray="1.1 0.9"/><rect x="1019" y="456" width="17" height="1" fill="#a8a8a8"/>
<path d="M1020 483.5H1035L1027.5 496.6Z" fill="#d0d0d0"/><path d="M1020 483.8L1027.5 496.4L1035 483.8" fill="none" stroke="#a8a8a8" stroke-width="1.1" stroke-dasharray="1.1 0.9"/><rect x="1019" y="483" width="17" height="1" fill="#a8a8a8"/>
<rect x="1019" y="497" width="17" height="1" fill="#a8a8a8"/>
<path d="M1020.8 518.8L1034.4 532.4M1034.4 518.8L1020.8 532.4" stroke="#ff0000" stroke-width="2.1" fill="none"/>
<path d="M1022.5 550.5H1032.5L1036.5 555.5V568.5H1022.5Z" fill="#ccccff"/><path d="M1023.5 568V551.5H1032" fill="none" stroke="#ffffff" stroke-width="1"/><path d="M1022.5 569V550.5H1033 M1036.5 555V569 M1022 568.5H1037" fill="none" stroke="#000" stroke-width="1"/><rect x="1031" y="550" width="2.4" height="1.7" fill="#000"/><path d="M1031.6 551.2L1036.8 556.2L1036.8 554.4L1033.8 550.4Z" fill="#ffffff"/><path d="M1031 551.9L1036.6 557" fill="none" stroke="#000" stroke-width="1.5" stroke-dasharray="1.5 0.5"/><path d="M1034.1 551.3L1036.8 555" fill="none" stroke="#000" stroke-width="1.2" stroke-dasharray="1.2 0.9"/>
<path d="M1015.6 560.5L1020.5 555.4V558.5H1030.5V562.5H1020.5V565.6Z" fill="#00c040" stroke="#000" stroke-width="1.25" stroke-linejoin="miter"/>
<path d="M421.5 657.5H435.5L439.5 662.5V673.5H421.5Z" fill="#e6e6e6"/><path d="M421.5 674V657.5H436 M439.5 662V674" fill="none" stroke="#000" stroke-width="1"/><rect x="434" y="657" width="2.4" height="1.7" fill="#000"/><path d="M434.6 658.2L439.8 663.2L439.8 661.4L436.8 657.4Z" fill="#ffffff"/><path d="M434 658.9L439.6 664" fill="none" stroke="#000" stroke-width="1.5" stroke-dasharray="1.5 0.5"/><path d="M437.1 658.3L439.8 662" fill="none" stroke="#000" stroke-width="1.2" stroke-dasharray="1.2 0.9"/>
<path d="M425.6 665.6L430 661.2L434.6 665.6H431.6V669.6H434.6V667.4H436.6V671.2L434.8 673H430.6L428.6 671V665.6Z" fill="#00d820" stroke="#000" stroke-width="0.9" stroke-linejoin="round"/>
<path d="M527.5 657.5H541.5L545.5 662.5V673.5H527.5Z" fill="#e6e6e6"/><path d="M527.5 674V657.5H542 M545.5 662V674" fill="none" stroke="#000" stroke-width="1"/><rect x="540" y="657" width="2.4" height="1.7" fill="#000"/><path d="M540.6 658.2L545.8 663.2L545.8 661.4L542.8 657.4Z" fill="#ffffff"/><path d="M540 658.9L545.6 664" fill="none" stroke="#000" stroke-width="1.5" stroke-dasharray="1.5 0.5"/><path d="M543.1 658.3L545.8 662" fill="none" stroke="#000" stroke-width="1.2" stroke-dasharray="1.2 0.9"/>
<path d="M536.5 659.4L538.8 661.8V665.2L537.6 666.4V667.8L536.5 669L535.4 667.8V666.4L534.2 665.2V661.8Z" fill="#00d820" stroke="#00a000" stroke-width="0.8"/><circle cx="536.5" cy="671.6" r="1.7" fill="#00d820" stroke="#00a000" stroke-width="0.6"/>
<g shape-rendering="crispEdges"><rect x="622" y="656" width="12" height="10" fill="#ccffff"/><rect x="621" y="655" width="12" height="1" fill="#000"/><rect x="633" y="656" width="1" height="1" fill="#000"/><rect x="634" y="657" width="1" height="9" fill="#000"/><rect x="621" y="655" width="1" height="11" fill="#000"/><rect x="632" y="656" width="1" height="1" fill="#ffffff"/><rect x="633" y="657" width="1" height="1" fill="#e8ffff"/><rect x="623" y="657" width="2" height="1" fill="#3a3a3a"/><rect x="623" y="658" width="1" height="2" fill="#3a3a3a"/><rect x="626" y="659" width="1" height="1" fill="#3a3a3a"/><rect x="628" y="657" width="1" height="3" fill="#3a3a3a"/><rect x="629" y="659" width="1" height="1" fill="#3a3a3a"/><rect x="631" y="659" width="1" height="1" fill="#3a3a3a"/><rect x="623" y="661" width="1" height="3" fill="#3a3a3a"/><rect x="625" y="661" width="2" height="1" fill="#3a3a3a"/><rect x="626" y="662" width="1" height="2" fill="#3a3a3a"/><rect x="628" y="663" width="1" height="1" fill="#3a3a3a"/><rect x="630" y="662" width="2" height="1" fill="#3a3a3a"/><rect x="631" y="663" width="1" height="1" fill="#3a3a3a"/><rect x="619" y="666" width="18" height="4" fill="#a8a8a8"/><rect x="620" y="665" width="1" height="1" fill="#a8a8a8"/><rect x="635" y="665" width="1" height="1" fill="#a8a8a8"/><rect x="619" y="671" width="18" height="3" fill="#6e6e6e"/><rect x="621" y="665" width="14" height="1" fill="#000"/><rect x="620" y="664" width="1" height="1" fill="#000"/><rect x="635" y="664" width="1" height="1" fill="#000"/><rect x="619" y="665" width="1" height="1" fill="#000"/><rect x="636" y="665" width="1" height="1" fill="#000"/><rect x="618" y="666" width="1" height="8" fill="#000"/><rect x="637" y="666" width="1" height="8" fill="#000"/><rect x="619" y="670" width="18" height="1" fill="#000"/><rect x="619" y="674" width="18" height="1" fill="#000"/><rect x="633" y="668" width="3" height="1" fill="#000"/></g>
<g shape-rendering="crispEdges"><rect x="757" y="656" width="12" height="10" fill="#ccffff"/><rect x="756" y="655" width="12" height="1" fill="#000"/><rect x="768" y="656" width="1" height="1" fill="#000"/><rect x="769" y="657" width="1" height="9" fill="#000"/><rect x="756" y="655" width="1" height="11" fill="#000"/><rect x="767" y="656" width="1" height="1" fill="#ffffff"/><rect x="768" y="657" width="1" height="1" fill="#e8ffff"/><rect x="758" y="657" width="2" height="1" fill="#3a3a3a"/><rect x="758" y="658" width="1" height="2" fill="#3a3a3a"/><rect x="761" y="659" width="1" height="1" fill="#3a3a3a"/><rect x="763" y="657" width="1" height="3" fill="#3a3a3a"/><rect x="764" y="659" width="1" height="1" fill="#3a3a3a"/><rect x="766" y="659" width="1" height="1" fill="#3a3a3a"/><rect x="758" y="661" width="1" height="3" fill="#3a3a3a"/><rect x="760" y="661" width="2" height="1" fill="#3a3a3a"/><rect x="761" y="662" width="1" height="2" fill="#3a3a3a"/><rect x="763" y="663" width="1" height="1" fill="#3a3a3a"/><rect x="765" y="662" width="2" height="1" fill="#3a3a3a"/><rect x="766" y="663" width="1" height="1" fill="#3a3a3a"/><rect x="754" y="666" width="18" height="4" fill="#a8a8a8"/><rect x="755" y="665" width="1" height="1" fill="#a8a8a8"/><rect x="770" y="665" width="1" height="1" fill="#a8a8a8"/><rect x="754" y="671" width="18" height="3" fill="#6e6e6e"/><rect x="756" y="665" width="14" height="1" fill="#000"/><rect x="755" y="664" width="1" height="1" fill="#000"/><rect x="770" y="664" width="1" height="1" fill="#000"/><rect x="754" y="665" width="1" height="1" fill="#000"/><rect x="771" y="665" width="1" height="1" fill="#000"/><rect x="753" y="666" width="1" height="8" fill="#000"/><rect x="772" y="666" width="1" height="8" fill="#000"/><rect x="754" y="670" width="18" height="1" fill="#000"/><rect x="754" y="674" width="18" height="1" fill="#000"/><rect x="768" y="668" width="3" height="1" fill="#000"/></g>
<path d="M853.5 655.5H863.5L867.5 660.5V673.5H853.5Z" fill="#ccccff"/><path d="M854.5 673V656.5H863" fill="none" stroke="#ffffff" stroke-width="1"/><path d="M853.5 674V655.5H864 M867.5 660V674 M853 673.5H868" fill="none" stroke="#000" stroke-width="1"/><rect x="862" y="655" width="2.4" height="1.7" fill="#000"/><path d="M862.6 656.2L867.8 661.2L867.8 659.4L864.8 655.4Z" fill="#ffffff"/><path d="M862 656.9L867.6 662" fill="none" stroke="#000" stroke-width="1.5" stroke-dasharray="1.5 0.5"/><path d="M865.1 656.3L867.8 660" fill="none" stroke="#000" stroke-width="1.2" stroke-dasharray="1.2 0.9"/>
<path d="M852.2 663.6L856 667.2L859.8 658.4" fill="none" stroke="#00c030" stroke-width="2.2"/>
<path d="M969.5 655.5H979.5L983.5 660.5V673.5H969.5Z" fill="#ccccff"/><path d="M970.5 673V656.5H979" fill="none" stroke="#ffffff" stroke-width="1"/><path d="M969.5 674V655.5H980 M983.5 660V674 M969 673.5H984" fill="none" stroke="#000" stroke-width="1"/><rect x="978" y="655" width="2.4" height="1.7" fill="#000"/><path d="M978.6 656.2L983.8 661.2L983.8 659.4L980.8 655.4Z" fill="#ffffff"/><path d="M978 656.9L983.6 662" fill="none" stroke="#000" stroke-width="1.5" stroke-dasharray="1.5 0.5"/><path d="M981.1 656.3L983.8 660" fill="none" stroke="#000" stroke-width="1.2" stroke-dasharray="1.2 0.9"/>
<path d="M964.5 663.5H973.5V660.2L978.8 665.5L973.5 670.8V667.5H964.5Z" fill="#00c040" stroke="#000" stroke-width="1.25" stroke-linejoin="miter"/></svg>
<!-- text layer -->
<div id="txt">
<div class="t" style="left:38.90px;top:9px;letter-spacing:0.150px;font-weight:bold;color:#1c1c1c;">RMA-Vorgang 001</div>
<div class="t" style="left:10.91px;top:30px;letter-spacing:0.217px;">Aktion</div>
<div class="t" style="left:17.90px;top:54px;letter-spacing:0.213px;">Übersicht</div>
<div class="t" style="left:99.22px;top:52px;letter-spacing:0.292px;">Geräte-Daten</div>
<div class="t" style="left:205.03px;top:54px;letter-spacing:0.345px;">Dokumente und Verknüpfungen</div>
<div class="t" style="left:19.83px;top:82px;letter-spacing:0.216px;">Kundenreferenz:</div>
<div class="t" style="left:78.73px;top:115px;letter-spacing:0.222px;">Kunde:</div>
<div class="t" style="left:11.91px;top:143px;letter-spacing:0.340px;">Ansprechpartner:</div>
<div class="t" style="left:67.01px;top:171px;letter-spacing:0.404px;">Adresse:</div>
<div class="t" style="left:75.98px;top:233px;letter-spacing:0.310px;">Straße:</div>
<div class="t" style="left:71.33px;top:278px;letter-spacing:0.096px;">PLZ/Ort:</div>
<div class="t" style="left:66.08px;top:306px;letter-spacing:0.314px;">Sprache:</div>
<div class="t" style="left:87.83px;top:334px;letter-spacing:0.118px;">Land:</div>
<div class="t" style="left:72.00px;top:362px;letter-spacing:0.405px;">Telefon:</div>
<div class="t" style="left:73.90px;top:390px;letter-spacing:0.197px;">Telefax:</div>
<div class="t" style="left:84.83px;top:418px;letter-spacing:-0.166px;">Email:</div>
<div class="t" style="left:129.93px;top:114px;letter-spacing:0.596px;color:#111111;">Fred Test</div>
<div class="t" style="left:129.93px;top:169px;letter-spacing:0.596px;color:#111111;">Fred Test</div>
<div class="t" style="left:131.00px;top:231px;letter-spacing:0.584px;color:#111111;">Testgasse 33</div>
<div class="t" style="left:130.19px;top:277px;letter-spacing:0.302px;color:#111111;">90459</div>
<div class="t" style="left:204.03px;top:277px;letter-spacing:0.393px;color:#111111;">Nürnberg</div>
<div class="t" style="left:129.93px;top:305px;letter-spacing:-0.129px;color:#111111;">DE</div>
<div class="t" style="left:169.72px;top:306px;letter-spacing:0.053px;">German</div>
<div class="t" style="left:129.93px;top:333px;letter-spacing:-0.129px;color:#111111;">DE</div>
<div class="t" style="left:169.72px;top:334px;letter-spacing:-0.044px;">Germany</div>
<div class="t" style="left:130.20px;top:361px;letter-spacing:0.400px;color:#111111;">0911/4308932</div>
<div class="t" style="left:130.36px;top:417px;letter-spacing:0.322px;color:#111111;">gkalb@ansys.de</div>
<div class="t" style="left:422.41px;top:82px;letter-spacing:-0.053px;">Artikel:</div>
<div class="t" style="left:527.31px;top:81px;letter-spacing:0.145px;">Auftrag</div>
<div class="t" style="left:582.78px;top:81px;letter-spacing:0.294px;color:#000000;">15/1694</div>
<div class="t" style="left:487.54px;top:100px;">2</div>
<div class="t" style="left:527.31px;top:108px;letter-spacing:-0.053px;">Artikel:</div>
<div class="t" style="left:526.73px;top:136px;letter-spacing:0.234px;">Menge:</div>
<div class="t" style="left:527.12px;top:164px;letter-spacing:0.051px;">Grund:</div>
<div class="t" style="left:526.72px;top:192px;letter-spacing:-0.017px;">Info:</div>
<div class="t" style="left:574.58px;top:107px;letter-spacing:0.380px;color:#111111;">10031</div>
<div class="t" style="left:719.72px;top:108px;letter-spacing:0.133px;">Canon EOS 40D</div>
<div class="t" style="left:705.48px;top:135px;color:#111111;">1</div>
<div class="t" style="left:574.93px;top:163px;letter-spacing:0.270px;color:#111111;">Defekte Ware</div>
<div class="t" style="left:742.22px;top:164px;letter-spacing:0.029px;">Geprüft</div>
<div class="t" style="left:822.33px;top:164px;letter-spacing:0.282px;">Neu liefern</div>
<div class="t" style="left:447.62px;top:659px;letter-spacing:0.058px;">Gutschrift</div>
<div class="t" style="left:553.31px;top:659px;letter-spacing:0.295px;">Auftrag</div>
<div class="t" style="left:644.13px;top:659px;letter-spacing:0.322px;">Beleg drucken</div>
<div class="t" style="left:779.13px;top:659px;letter-spacing:0.304px;">Drucken</div>
<div class="t" style="left:879.38px;top:659px;letter-spacing:0.347px;">Speichern</div>
<div class="t" style="left:990.38px;top:659px;letter-spacing:0.278px;">Schließen</div>
</div>
</body>
</html>
